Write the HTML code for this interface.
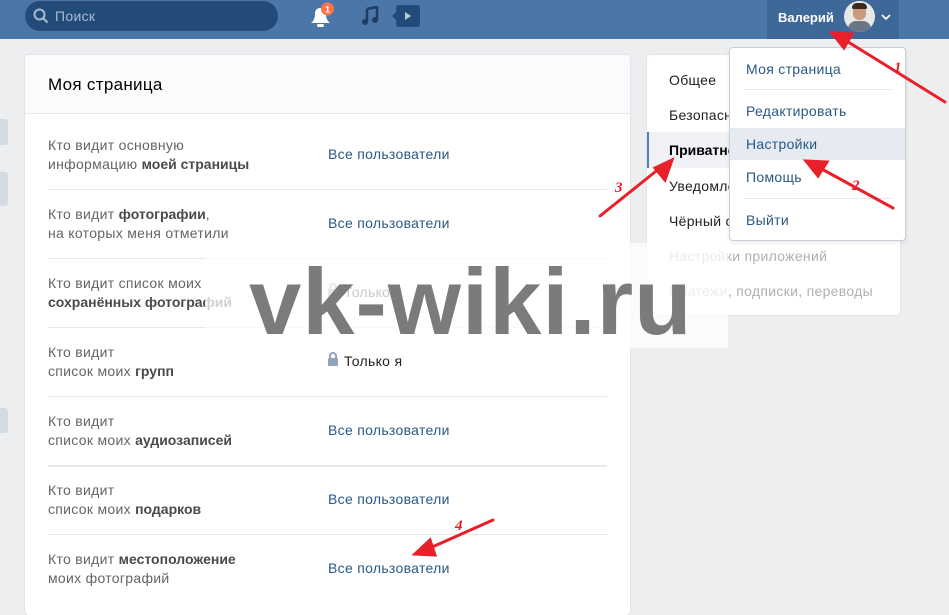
<!DOCTYPE html>
<html><head><meta charset="utf-8"><style>
*{box-sizing:border-box;margin:0;padding:0}
body{width:949px;height:596px;overflow:hidden;background:#edeef0;font-family:"Liberation Sans",Arial,sans-serif;font-size:14px;letter-spacing:.3px;position:relative;color:#222}
.hdr{position:absolute;left:0;top:0;width:949px;height:39px;background:#4a76a8}
.search{position:absolute;left:25px;top:1px;width:253px;height:30px;border-radius:15px;background:#224b7a;color:#a7bcd4;font-size:14px;padding:7px 0 0 30px}
.user{position:absolute;left:767px;top:0;width:132px;height:39px;background:#3d6898}
.panel{position:absolute;left:25px;top:55px;width:605px;height:560px;background:#fff;border-radius:4px;box-shadow:0 1px 0 #dce1e6,0 0 0 1px #e3e4e8}
.ptitle{height:59px;border-bottom:1px solid #e7e8ec;background:#fafbfc;font-size:17px;padding:20px 0 0 23px;color:#000;border-radius:4px 4px 0 0}
.row{position:absolute;left:23px;width:559px;border-top:1px solid #e7e8ec;height:69px}
.row .l{position:absolute;left:0;color:#656565;line-height:19px;font-size:14px}
.row .l b{color:#4a4a4a;letter-spacing:0}
.row .r{position:absolute;left:280px;color:#2a5885;font-size:14px}
.menu{position:absolute;left:647px;top:55px;width:253px;height:260px;background:#fff;border-radius:4px;box-shadow:0 0 0 1px #e3e4e8}
.mi{position:absolute;left:22px;font-size:14px;color:#222}
.dd{position:absolute;left:729px;top:47px;width:177px;height:194px;background:#fff;border:1px solid #c5d0db;border-radius:4px;box-shadow:0 2px 4px rgba(0,0,0,.08)}
.di{position:absolute;left:16px;font-size:14px;color:#2a5885}
.sep{position:absolute;left:14px;width:148px;height:1px;background:#e7e8ec}
.blk{position:absolute;left:0;width:8px;background:#d4dbe3;border-radius:0 3px 3px 0}
.wm{position:absolute;left:205px;top:243px;width:523px;height:105px;background:rgba(255,255,255,.75)}
.wmt{position:absolute;left:249px;top:252px;font-size:94px;font-weight:bold;color:#7b7b7b;letter-spacing:1px;line-height:100px}
.lock{display:inline-block;width:10px;height:8px;background:#93a3bc;border-radius:1px;margin-right:6px;position:relative}
.lock:before{content:"";position:absolute;left:1px;top:-6px;width:4px;height:6px;border:2px solid #93a3bc;border-bottom:none;border-radius:4px 4px 0 0}
</style></head><body>
<div class="hdr">
<div class="search"><svg style="position:absolute;left:8px;top:7px" width="16" height="16"><circle cx="6.5" cy="6.5" r="5" fill="none" stroke="#a7bcd4" stroke-width="2"/><line x1="10" y1="10" x2="14.5" y2="14.5" stroke="#a7bcd4" stroke-width="2"/></svg>Поиск</div>
<svg style="position:absolute;left:308px;top:1px" width="30" height="28"><path d="M3 22 Q7 19 7 13 Q7 7 12.5 7 Q18 7 18 13 Q18 19 22 22Z" fill="#fff"/><rect x="9" y="23" width="7" height="3" rx="1.5" fill="#fff"/><circle cx="19.5" cy="8" r="6.5" fill="#ff734c"/><text x="19.5" y="11.5" font-size="9" fill="#fff" text-anchor="middle" font-weight="bold" letter-spacing="0">1</text></svg>
<svg style="position:absolute;left:360px;top:6px" width="20" height="20"><path d="M7 3 L17 1 L17 14" fill="none" stroke="#1f3d63" stroke-width="2.5"/><path d="M7 3 L7 16" stroke="#1f3d63" stroke-width="2.5"/><circle cx="5" cy="16" r="3" fill="#1f3d63"/><circle cx="15" cy="14" r="3" fill="#1f3d63"/></svg>
<div style="position:absolute;left:396px;top:5px;width:24px;height:22px;background:#224b7a;border-radius:3px"></div>
<svg style="position:absolute;left:392px;top:5px" width="30" height="22"><path d="M0 11 L4 7 L4 15Z" fill="#224b7a"/><path d="M13 7 L19 11 L13 15Z" fill="#b9cbe0"/></svg>
<div class="user"><span style="position:absolute;left:11px;top:10px;color:#fff;font-weight:bold;font-size:13px;letter-spacing:0">Валерий</span>
<div style="position:absolute;left:77px;top:1px;width:31px;height:31px;border-radius:50%;background:#e8e8e8;overflow:hidden"><div style="position:absolute;left:9px;top:4px;width:13px;height:15px;border-radius:6px;background:#c89a7e"></div><div style="position:absolute;left:8px;top:2px;width:15px;height:6px;border-radius:6px 6px 2px 2px;background:#3a2a20"></div><div style="position:absolute;left:4px;top:20px;width:23px;height:14px;border-radius:8px 8px 0 0;background:#6a7684"></div></div>
<svg style="position:absolute;left:114px;top:14px" width="10" height="7"><path d="M1 1 L5 5 L9 1" fill="none" stroke="#fff" stroke-width="1.6"/></svg></div>
</div>
<div class="blk" style="top:119px;height:26px"></div>
<div class="blk" style="top:172px;height:34px"></div>
<div class="blk" style="top:408px;height:25px"></div>
<div class="panel"><div class="ptitle">Моя страница</div>
<div class="row" style="top:60px;border-top:none"><div class="l" style="top:21px">Кто видит основную<br>информацию <b>моей страницы</b></div><div class="r" style="top:31px">Все пользователи</div></div>
<div class="row" style="top:134px"><div class="l" style="top:15px">Кто видит <b>фотографии</b>,<br>на которых меня отметили</div><div class="r" style="top:25px">Все пользователи</div></div>
<div class="row" style="top:203px"><div class="l" style="top:15px">Кто видит список моих<br><b>сохранённых фотографий</b></div><div class="r" style="top:25px;color:#222"><span class="lock"></span>Только я</div></div>
<div class="row" style="top:272px"><div class="l" style="top:15px">Кто видит<br>список моих <b>групп</b></div><div class="r" style="top:25px;color:#222"><span class="lock"></span>Только я</div></div>
<div class="row" style="top:341px"><div class="l" style="top:15px">Кто видит<br>список моих <b>аудиозаписей</b></div><div class="r" style="top:25px">Все пользователи</div></div>
<div class="row" style="top:410px;border-top:2px solid #e7e8ec"><div class="l" style="top:14px">Кто видит<br>список моих <b>подарков</b></div><div class="r" style="top:24px">Все пользователи</div></div>
<div class="row" style="top:479px"><div class="l" style="top:15px">Кто видит <b>местоположение</b><br>моих фотографий</div><div class="r" style="top:25px">Все пользователи</div></div>
</div>
<div class="menu">
<div class="mi" style="top:17px">Общее</div>
<div class="mi" style="top:52px">Безопасность</div>
<div style="position:absolute;left:0;top:77px;width:253px;height:36px;background:#f0f2f5;border-left:2px solid #5181b8"></div>
<div class="mi" style="top:87px;font-weight:bold;color:#000;letter-spacing:0">Приватность</div>
<div class="mi" style="top:123px">Уведомления</div>
<div class="mi" style="top:158px">Чёрный список</div>
<div class="mi" style="top:193px;color:#b0b0b0">Настройки приложений</div>
<div class="mi" style="top:228px;color:#b0b0b0">Платежи, подписки, переводы</div>
</div>
<div class="wm"></div>
<div class="wmt">vk-wiki.ru</div>
<div class="dd">
<div class="di" style="top:13px">Моя страница</div>
<div class="sep" style="top:41px"></div>
<div class="di" style="top:55px">Редактировать</div>
<div style="position:absolute;left:0;top:80px;width:175px;height:32px;background:#e5ebf1"></div>
<div class="di" style="top:88px">Настройки</div>
<div class="di" style="top:121px">Помощь</div>
<div class="sep" style="top:150px"></div>
<div class="di" style="top:164px">Выйти</div>
</div>
<svg style="position:absolute;left:0;top:0" width="949" height="596">
<g stroke="#e8202a" stroke-width="3" fill="#e8202a" stroke-linecap="round">
<line x1="945" y1="102" x2="845" y2="40"/><path d="M832 33 L852 34 L844 48Z"/>
<line x1="893" y1="208" x2="820" y2="168"/><path d="M806 161 L827 162 L818 176Z"/>
<line x1="600" y1="216" x2="660" y2="168"/><path d="M672 160 L665 180 L655 168Z"/>
<line x1="493" y1="520" x2="430" y2="548"/><path d="M415 554 L430 540 L435 555Z"/>
</g>
<g fill="#e8202a" font-family="Liberation Serif" font-style="italic" font-size="15" font-weight="bold">
<text x="894" y="72">1</text><text x="852" y="190">2</text><text x="615" y="192">3</text><text x="455" y="530">4</text></g>
</svg>
</body></html>
